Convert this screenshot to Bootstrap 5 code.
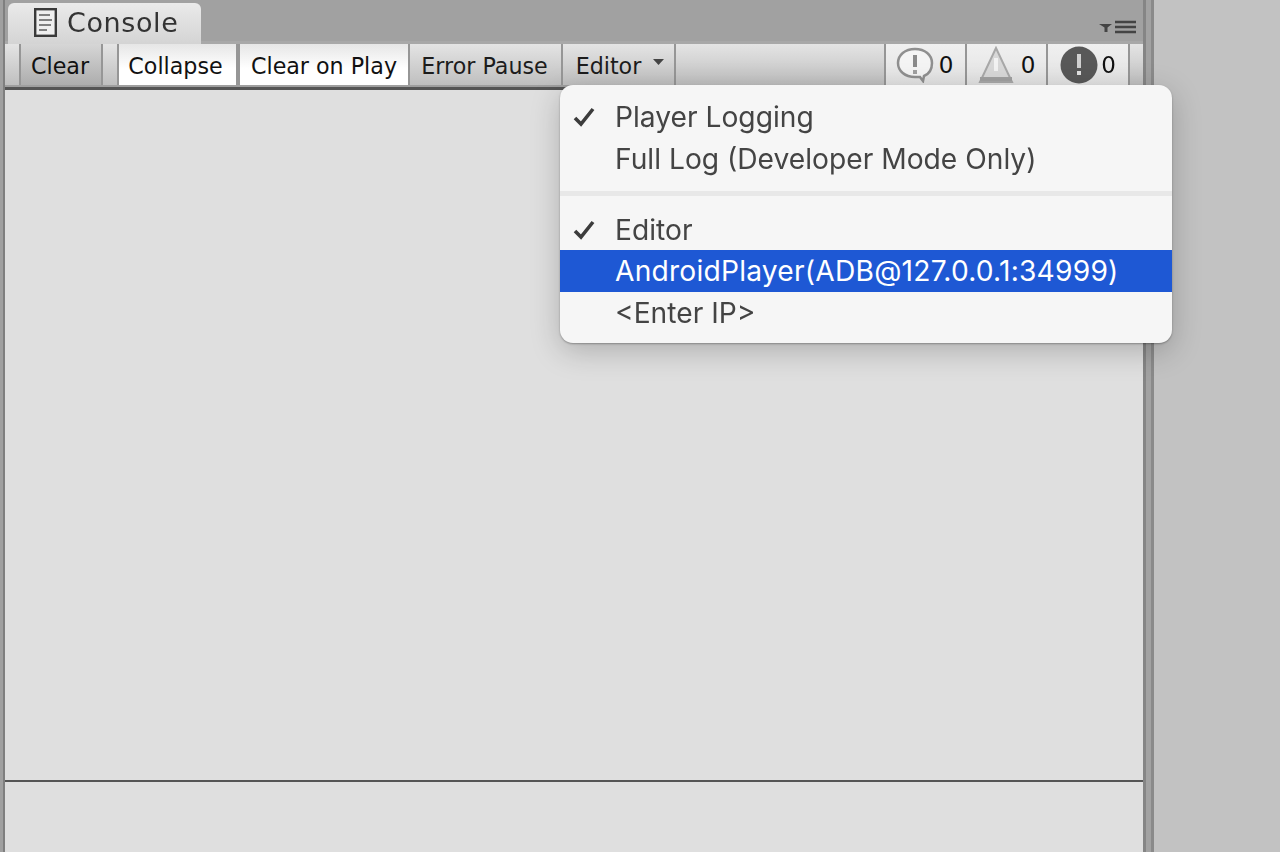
<!DOCTYPE html>
<html lang="en">
<head>
<meta charset="utf-8">
<title>Console</title>
<link href="https://cdn.jsdelivr.net/npm/bootstrap@5.3.0/dist/css/bootstrap.min.css" rel="stylesheet">
<style>
html,body{height:852px;overflow:hidden;background:#c2c2c2;}
.shell{height:852px;position:relative;filter:blur(.45px);}
.edge-l{width:5px;background:linear-gradient(90deg,#a0a0a0 0 3px,#7f7f7f 3px);}
.edge-r{width:11px;background:linear-gradient(90deg,#858585 0 3px,#a2a2a2 3px 8px,#8a8a8a 8px);}
.side{width:126px;background:#c2c2c2;}
.pane{width:1138px;}
.head{height:41px;background:#a1a1a1;position:relative;}
.tabb{position:absolute;left:3px;top:3px;width:193px;height:41px;background:linear-gradient(#eaeaea,#d4d4d4);border-radius:6px 6px 0 0;padding-left:26px;padding-bottom:2px;gap:10px;font:27px/1 "DejaVu Sans",sans-serif;letter-spacing:.6px;color:#333;z-index:2;}
.burger{position:absolute;right:7px;top:20px;gap:2px;}
.tbar{height:49px;background:#a8a8a8;padding-top:3px;}
.tline{height:41px;background:#969696;}
.tcell{height:41px;font:22.2px/44px "DejaVu Sans",sans-serif;color:#1c1c1c;margin-right:2px;padding:0;text-align:center;background:linear-gradient(#e4e4e4,#bfbfbf);}
.w0{width:14px}.w1{width:80px;padding-right:2px;background:linear-gradient(#d6d6d6,#adadad);color:#111;}.w2{width:14px}
.w3{width:117px;margin-right:4px;padding-right:4px}.w4{width:168px}.w3,.w4{background:linear-gradient(#e6e6e6,#fff 60%);color:#111;}
.w5{width:151px;padding-right:2px}.w6{width:111px;padding-left:4px;padding-top:2px;justify-content:center;gap:12px}
.w7{flex:1;}
.w8{width:79px;padding-right:2px}.w9{width:79px}.w10{width:80px;}
.w8,.w9,.w10{background:linear-gradient(#f0f0f0,#e2e2e2);justify-content:center;gap:3px;color:#111;font-size:23px;}
.w8{gap:5px}
.wlast{width:13px;margin-right:0;}
.tbar-bottom{height:5px;background:linear-gradient(#9f9f9f 0 2px,#555 2px);}
.logs{height:690px;background:#dfdfdf;}
.rule{height:2px;background:#555;}
.detail{flex:1;background:#dfdfdf;}
.popmenu{position:absolute;display:block;left:560px;top:85px;width:612px;height:258px;margin:0;padding:11px 0 0;border:0;border-radius:13px;background:#f6f6f6;box-shadow:0 8px 30px rgba(0,0,0,.22),0 1px 2px rgba(0,0,0,.3);font:28.2px/41.5px "Inter","Liberation Sans",sans-serif;overflow:hidden;z-index:5;}
.popmenu .dropdown-item{padding:1px 0 0 55px;height:41.5px;line-height:41.5px;color:#444;position:relative;background:transparent;}
.popmenu .dropdown-item.active{background:#1e58d4;color:#fff;height:42px;letter-spacing:.21px;}
.popmenu .dropdown-divider{margin:12px 0 12.500px;border-top:5px solid #e8e8e8;opacity:1;}
.tick{position:absolute;left:13px;top:11px;}
</style>
</head>
<body class="m-0">
<div class="shell d-flex">
  <div class="edge-l flex-shrink-0"></div>
  <div class="pane d-flex flex-column flex-shrink-0">
    <div class="head">
      <div class="tabb d-flex align-items-center">
        <svg width="23" height="29" viewBox="0 0 23 29"><rect x="1.2" y="1.2" width="20.6" height="26.6" fill="#efefef" stroke="#3a3a3a" stroke-width="2.4"/><path d="M5 7h11M5 12h13M5 17h12M5 22h8" stroke="#808080" stroke-width="2.2"/></svg>
        <span>Console</span>
      </div>
      <div class="burger d-flex align-items-center">
        <svg width="14" height="12" viewBox="0 0 14 12"><path d="M0 3h13L8.5 6.5V11h-3V6.5z" fill="#444"/></svg>
        <svg width="21" height="14" viewBox="0 0 21 14"><path d="M0 2h21M0 7h21M0 12h21" stroke="#444" stroke-width="2.6"/></svg>
      </div>
    </div>
    <div class="tbar d-flex flex-column">
      <div class="tline d-flex">
        <div class="tcell w0 flex-shrink-0"></div>
        <div class="tcell w1 flex-shrink-0">Clear</div>
        <div class="tcell w2 flex-shrink-0"></div>
        <div class="tcell w3 flex-shrink-0">Collapse</div>
        <div class="tcell w4 flex-shrink-0">Clear on Play</div>
        <div class="tcell w5 flex-shrink-0">Error Pause</div>
        <div class="tcell w6 flex-shrink-0 d-flex align-items-center"><span>Editor</span><svg width="12" height="8" viewBox="0 0 12 8" class="mb-2"><path d="M0 1h11L5.500 7z" fill="#444"/></svg></div>
        <div class="tcell w7"></div>
        <div class="tcell w8 flex-shrink-0 d-flex align-items-center">
          <svg width="38" height="36" viewBox="0 0 38 36"><path d="M19 2C9 2 2 8 2 16s7 14 17 14h5l3 4 1-5c5-2 8-7 8-13C36 8 29 2 19 2z" fill="#f4f4f4" stroke="#8f8f8f" stroke-width="2.500"/><path d="M19 8v12" stroke="#8a8a8a" stroke-width="4"/><path d="M19 23v4" stroke="#a0a0a0" stroke-width="4"/></svg><span>0</span>
        </div>
        <div class="tcell w9 flex-shrink-0 d-flex align-items-center">
          <svg width="36" height="38" viewBox="0 0 36 38"><path d="M18 2L2 36h32z" fill="#d8d8d8" stroke="#a8a8a8" stroke-width="2"/><path d="M18 12v13" stroke="#f2f2f2" stroke-width="4"/><path d="M2 33h32" stroke="#a0a0a0" stroke-width="4"/></svg><span class="ms-1">0</span>
        </div>
        <div class="tcell w10 flex-shrink-0 d-flex align-items-center">
          <svg width="38" height="38" viewBox="0 0 38 38"><circle cx="19" cy="19" r="18.500" fill="#585858"/><path d="M19 8v14" stroke="#d0d0d0" stroke-width="4"/><path d="M19 25v4" stroke="#e0e0e0" stroke-width="4"/></svg><span>0</span>
        </div>
        <div class="tcell wlast flex-shrink-0"></div>
      </div>
      <div class="tbar-bottom"></div>
    </div>
    <div class="logs"></div>
    <div class="rule"></div>
    <div class="detail"></div>
  </div>
  <div class="edge-r flex-shrink-0"></div>
  <div class="side flex-grow-1"></div>
  <ul class="dropdown-menu show popmenu list-unstyled">
    <li><a class="dropdown-item" href="#"><svg class="tick" width="22" height="20" viewBox="0 0 22 20"><path d="M2 11l6 6L20 2" fill="none" stroke="#3c3c3c" stroke-width="3.600"/></svg>Player Logging</a></li>
    <li><a class="dropdown-item" href="#">Full Log (Developer Mode Only)</a></li>
    <li><hr class="dropdown-divider"></li>
    <li><a class="dropdown-item" href="#"><svg class="tick" width="22" height="20" viewBox="0 0 22 20"><path d="M2 11l6 6L20 2" fill="none" stroke="#3c3c3c" stroke-width="3.600"/></svg>Editor</a></li>
    <li><a class="dropdown-item active" href="#">AndroidPlayer(ADB@127.0.0.1:34999)</a></li>
    <li><a class="dropdown-item" href="#">&lt;Enter IP&gt;</a></li>
  </ul>
</div>
<script src="https://cdn.jsdelivr.net/npm/bootstrap@5.3.0/dist/js/bootstrap.bundle.min.js"></script>
</body>
</html>
